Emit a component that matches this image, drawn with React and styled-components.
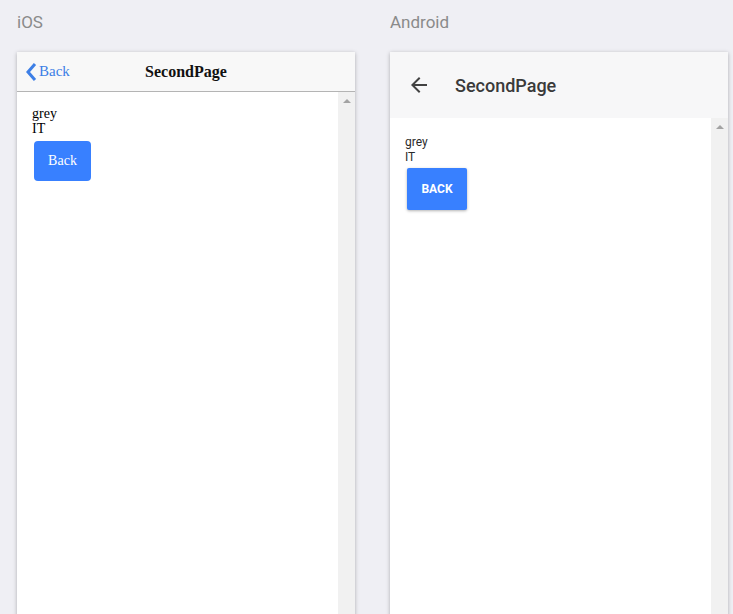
import React from "react";
import styled, { createGlobalStyle } from "styled-components";

const GlobalStyle = createGlobalStyle`
  html, body {
    margin: 0;
    padding: 0;
    background: #efeff4;
    overflow: hidden;
  }
`;

const Page = styled.div`
  display: grid;
  grid-template-columns: 338px 338px;
  column-gap: 35px;
  padding: 12px 0 0 17px;
  height: 614px;
  box-sizing: border-box;
`;

const Column = styled.div`
  display: flex;
  flex-direction: column;
  gap: 20px;
`;

const Label = styled.div`
  font-family: Roboto, "Liberation Sans", sans-serif;
  font-weight: 400;
  font-size: 17px;
  line-height: 20px;
  color: #8a8a8a;
`;

const Device = styled.div`
  height: 580px;
  background: #fff;
  box-shadow: 0 1px 4px rgba(0, 0, 0, 0.28);
  display: flex;
  flex-direction: column;
  overflow: hidden;
`;

const IosHeader = styled.div`
  height: 39px;
  flex-shrink: 0;
  background: #f8f8f8;
  border-bottom: 1px solid #b4b4b4;
  display: grid;
  grid-template-columns: 1fr auto 1fr;
  align-items: center;
  font-family: "Liberation Serif", serif;
`;

const IosBack = styled.div`
  display: flex;
  align-items: center;
  gap: 1px;
  padding-left: 8px;
  color: #3d7fe6;
  font-size: 15px;
`;

const IosTitle = styled.div`
  font-weight: bold;
  font-size: 16px;
  color: #111;
`;

const MdHeader = styled.div`
  height: 66px;
  flex-shrink: 0;
  background: #f7f7f8;
  display: flex;
  align-items: center;
  padding-left: 17px;
  gap: 24px;
  font-family: Roboto, "Liberation Sans", sans-serif;
`;

const MdTitle = styled.div`
  font-weight: 500;
  font-size: 18px;
  color: #3a3a3a;
`;

const Body = styled.div`
  flex: 1;
  display: flex;
`;

const Content = styled.div`
  flex: 1;
  padding: ${(p) => (p.$md ? "17px 0 0 15px" : "14px 0 0 15px")};
  font-family: ${(p) =>
    p.$md ? 'Roboto, "Liberation Sans", sans-serif' : '"Liberation Serif", serif'};
  font-size: ${(p) => (p.$md ? "12px" : "14px")};
  line-height: 15px;
  color: ${(p) => (p.$md ? "#2a2a2a" : "#000")};
`;

const Button = styled.button`
  display: block;
  margin: ${(p) => (p.$md ? "3px 0 0 2px" : "5px 0 0 2px")};
  width: ${(p) => (p.$md ? "60px" : "57px")};
  height: ${(p) => (p.$md ? "42px" : "40px")};
  border: none;
  border-radius: ${(p) => (p.$md ? "2px" : "4px")};
  background: #3880ff;
  color: #fff;
  font-family: ${(p) =>
    p.$md ? 'Roboto, "Liberation Sans", sans-serif' : '"Liberation Serif", serif'};
  font-size: ${(p) => (p.$md ? "12px" : "14px")};
  font-weight: ${(p) => (p.$md ? 700 : 400)};
  box-shadow: ${(p) => (p.$md ? "0 1px 3px rgba(0,0,0,0.3)" : "none")};
  padding: 0;
`;

const Scrollbar = styled.div`
  width: 17px;
  flex-shrink: 0;
  background: #f1f1f1;
  display: flex;
  justify-content: center;
  padding-top: 7px;
`;

const Arrow = styled.div`
  width: 0;
  height: 0;
  border-left: 4px solid transparent;
  border-right: 4px solid transparent;
  border-bottom: 4px solid #a3a3a3;
`;

export default function App() {
  return (
    <>
      <GlobalStyle />
      <Page>
        <Column>
          <Label>iOS</Label>
          <Device>
            <IosHeader>
              <IosBack>
                <svg width="13" height="20" viewBox="0 0 13 20">
                  <path d="M10 2 L3 10 L10 18" fill="none" stroke="#3d7fe6" strokeWidth="3" />
                </svg>
                Back
              </IosBack>
              <IosTitle>SecondPage</IosTitle>
              <div />
            </IosHeader>
            <Body>
              <Content>
                grey
                <br />
                IT
                <Button>Back</Button>
              </Content>
              <Scrollbar>
                <Arrow />
              </Scrollbar>
            </Body>
          </Device>
        </Column>
        <Column>
          <Label>Android</Label>
          <Device>
            <MdHeader>
              <svg width="24" height="24" viewBox="0 0 24 24">
                <path
                  d="M20 11H7.83l5.59-5.59L12 4l-8 8 8 8 1.41-1.41L7.83 13H20v-2z"
                  fill="#424242"
                />
              </svg>
              <MdTitle>SecondPage</MdTitle>
            </MdHeader>
            <Body>
              <Content $md>
                grey
                <br />
                IT
                <Button $md>BACK</Button>
              </Content>
              <Scrollbar>
                <Arrow />
              </Scrollbar>
            </Body>
          </Device>
        </Column>
      </Page>
    </>
  );
}
